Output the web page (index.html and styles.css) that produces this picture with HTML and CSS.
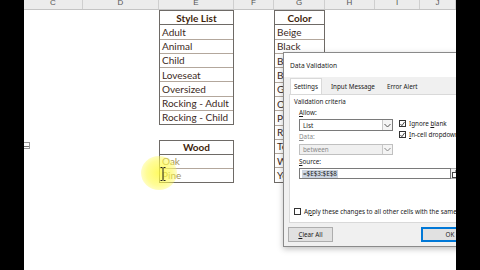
FILE: index.html
```html
<!DOCTYPE html>
<html>
<head>
<meta charset="utf-8">
<link rel="stylesheet" href="styles.css">
</head>
<body>
<div class="screen">
  <div class="bar"></div>
  <div class="sheet">
    <div class="colhead">
      <span>C</span><span>D</span><span>E</span><span>F</span><span>G</span><span>H</span><span>I</span><span>J</span>
    </div>
    <div class="grid">
      <div class="tbl style-list">
        <div class="hd">Style List</div>
        <div class="rw">Adult</div>
        <div class="rw">Animal</div>
        <div class="rw">Child</div>
        <div class="rw">Loveseat</div>
        <div class="rw">Oversized</div>
        <div class="rw">Rocking - Adult</div>
        <div class="rw">Rocking - Child</div>
      </div>
      <div class="tbl color">
        <div class="hd">Color</div>
        <div class="rw">Beige</div>
        <div class="rw">Black</div>
        <div class="rw">Blue</div>
        <div class="rw">Brown</div>
        <div class="rw">Green</div>
        <div class="rw">Orange</div>
        <div class="rw">Pink</div>
        <div class="rw">Red</div>
        <div class="rw">Teal</div>
        <div class="rw">White</div>
        <div class="rw">Yellow</div>
      </div>
      <div class="tbl wood">
        <div class="hd">Wood</div>
        <div class="rw light">Oak</div>
        <div class="rw light">Pine</div>
      </div>
    </div>

    <div class="marker"></div>
    <div class="glow"></div>
    <svg class="ibeam" width="6" height="14" viewBox="0 0 6 14">
      <path d="M0.5 0.5h2M3.5 0.5h2M3 1v12M0.5 13.5h2M3.5 13.5h2" stroke="#222" stroke-width="1" fill="none"/>
    </svg>

    <div class="dialog">
      <div class="title">Data Validation</div>
      <div class="tabs">
        <span class="tab active">Settings</span>
        <span class="tab">Input Message</span>
        <span class="tab">Error Alert</span>
      </div>
      <div class="panel">
        <div class="lbl">Validation criteria</div>
        <div class="criteria">
          <div class="leftcol">
            <div class="lbl"><u>A</u>llow:</div>
            <div class="select"><span>List</span><span class="arrow"><svg width="7" height="5" viewBox="0 0 7 5"><path d="M0.5 1l3 3 3-3" stroke="#555" fill="none"/></svg></span></div>
            <div class="lbl dis"><u>D</u>ata:</div>
            <div class="select disabled"><span>between</span><span class="arrow"><svg width="7" height="5" viewBox="0 0 7 5"><path d="M0.5 1l3 3 3-3" stroke="#888" fill="none"/></svg></span></div>
          </div>
          <div class="rightcol">
            <div class="chk"><span class="box on"><svg width="6" height="6" viewBox="0 0 6 6"><path d="M0.5 3l1.8 2 3.2-4.5" stroke="#222" fill="none"/></svg></span><span>Ignore <u>b</u>lank</span></div>
            <div class="chk"><span class="box on"><svg width="6" height="6" viewBox="0 0 6 6"><path d="M0.5 3l1.8 2 3.2-4.5" stroke="#222" fill="none"/></svg></span><span><u>I</u>n-cell dropdown</span></div>
          </div>
        </div>
        <div class="lbl src"><u>S</u>ource:</div>
        <div class="srcrow">
          <div class="input"><span class="sel">=$E$3:$E$8</span></div>
          <span class="rangebtn"><svg width="8" height="8" viewBox="0 0 8 8"><rect x="0.5" y="2.5" width="6" height="5" fill="#fff" stroke="#444"/><path d="M3 1l3 0 0 3" stroke="#444" fill="none"/></svg></span>
        </div>
        <div class="chk apply"><span class="box"></span><span>A<u>p</u>ply these changes to all other cells with the same settings</span></div>
      </div>
      <div class="buttons">
        <span class="btn"><u>C</u>lear All</span>
        <span class="btn ok">OK</span>
      </div>
    </div>
  </div>
  <div class="bar"></div>
</div>
</body>
</html>
```

FILE: styles.css
```css
* { box-sizing: border-box; }
html, body { margin: 0; padding: 0; background: #000; }
.screen { display: flex; width: 480px; height: 270px; }
.bar { width: 24px; background: #000; flex: none; }
.sheet {
  position: relative;
  width: 432px;
  height: 270px;
  background: #fff;
  overflow: hidden;
  font-family: Lato, "Liberation Sans", sans-serif;
}
.colhead {
  display: grid;
  grid-template-columns: 59px 76px 75px 40px 51px 50px 45px 36px;
  height: 10px;
  background: #ececec;
  border-bottom: 1px solid #c4c4c4;
  overflow: hidden;
}
.colhead span {
  display: block;
  text-align: center;
  font: 8px "Liberation Sans", sans-serif;
  color: #555;
  line-height: 10px;
  margin-top: -2px;
  border-right: 1px solid #cfcfcf;
  height: 14px;
}
.grid {
  display: grid;
  grid-template-columns: 59px 76px 75px 40px 51px 50px 45px 36px;
  grid-auto-rows: 14.4px;
}
.tbl {
  display: flex;
  flex-direction: column;
  border: 1px solid #6e6a66;
  font-size: 10px;
  color: #3d2a1d;
}
.tbl .hd {
  flex: 1;
  text-align: center;
  font-weight: bold;
  color: #3f1f0c;
  border-bottom: 1px solid #6e6a66;
  display: flex; align-items: center; justify-content: center;
}
.tbl .rw {
  flex: 1;
  padding-left: 2px;
  border-bottom: 1px solid #b3a79c;
  display: flex; align-items: center;
  white-space: nowrap;
  overflow: hidden;
}
.tbl .rw:last-child { border-bottom: none; }
.tbl .rw.light { color: #a49455; }
.style-list { grid-column: 3; grid-row: 1 / span 8; }
.color { grid-column: 5; grid-row: 1 / span 12; }
.wood { grid-column: 3; grid-row: 10 / span 3; }

.marker {
  position: absolute;
  left: 0; top: 142px;
  width: 6px; height: 7px;
  border: 1px solid #999;
  border-left: none;
  background: linear-gradient(#fff 3px, #777 3px, #777 4px, #fff 4px);
}
.glow {
  position: absolute;
  left: 117px; top: 156px;
  width: 36px; height: 34px;
  border-radius: 50%;
  background: radial-gradient(circle, rgba(255,250,60,0.8) 0%, rgba(255,250,80,0.6) 50%, rgba(255,255,120,0) 100%);
}
.ibeam { position: absolute; left: 136px; top: 167px; }

.dialog {
  position: absolute;
  left: 259px; top: 52px;
  width: 205px; height: 195px;
  background: #f0f0f0;
  border: 1px solid #8a8a8a;
  box-shadow: 0 2px 6px rgba(0,0,0,0.25);
  font-family: "Noto Sans", "Liberation Sans", sans-serif;
  font-size: 6.3px;
  color: #1a1a1a;
  display: flex;
  flex-direction: column;
}
.title {
  height: 24px;
  background: #fff;
  padding: 8px 0 0 6px;
  font-size: 6.6px;
  line-height: 9px;
}
.tabs {
  display: flex;
  align-items: flex-end;
  height: 17px;
  padding-left: 6px;
}
.tab {
  display: block;
  height: 14px;
  line-height: 13px;
  padding: 0 4px;
  margin-right: 4px;
}
.tab.active {
  background: #fff;
  border: 1px solid #d9d9d9;
  border-bottom: none;
  height: 16px;
  line-height: 15px;
  padding: 0 3px;
  margin-right: 5px;
}
.panel {
  height: 129px;
  margin: 0 0 0 5px;
  background: #fff;
  border: 1px solid #d9d9d9;
  border-right: none;
  padding: 3px 0 0 4px;
}
.lbl { line-height: 8px; height: 9px; }
.lbl.dis { color: #8a8a8a; }
.criteria { display: flex; margin-top: 1px; }
.leftcol { width: 94px; margin-left: 5px; }
.leftcol .lbl { margin-top: 1px; }
.select {
  display: flex;
  justify-content: space-between;
  align-items: center;
  height: 12px;
  margin-top: 1px;
  border: 1px solid #7a7a7a;
  background: #fff;
  padding-left: 3px;
}
.select .arrow {
  width: 10px; height: 10px;
  border-left: 1px solid #c8c8c8;
  display: flex; align-items: center; justify-content: center;
  background: #f4f4f4;
}
.select.disabled {
  height: 11px;
  margin-top: 2px;
  border-color: #c0c0c0;
  background: #f0f0f0;
  color: #8a8a8a;
}
.select.disabled .arrow { height: 9px; }
.leftcol .lbl.dis { margin-top: 2px; }
.rightcol { margin-left: 6px; padding-top: 11px; }
.chk { display: flex; align-items: center; line-height: 9px; height: 9px; white-space: nowrap; margin-bottom: 2px; }
.box {
  width: 7px; height: 7px;
  border: 1px solid #333;
  background: #fff;
  margin-right: 3px;
  display: flex; align-items: center; justify-content: center;
  flex: none;
}
.lbl.src { margin-top: 3px; margin-left: 5px; }
.srcrow { display: flex; margin-top: 1px; margin-left: 5px; height: 11px; }
.input {
  width: 152px;
  border: 1px solid #7a7a7a;
  padding: 1px 2px;
  display: flex; align-items: center;
}
.sel { background: #cdd6e2; line-height: 8px; padding: 0 1px; }
.rangebtn {
  width: 11px;
  border: 1px solid #adadad;
  border-left: none;
  background: #f4f4f4;
  display: flex; align-items: center; justify-content: center;
}
.chk.apply { margin-top: 28px; }
.buttons {
  display: flex;
  justify-content: space-between;
  padding: 4px 0 0 4px;
}
.btn {
  height: 15px;
  width: 45px;
  border: 1px solid #adadad;
  background: #e1e1e1;
  text-align: center;
  line-height: 13px;
}
.btn.ok {
  width: 58px;
  border: 2px solid #0078d7;
  line-height: 11px;
  margin-right: 8px;
}
```
